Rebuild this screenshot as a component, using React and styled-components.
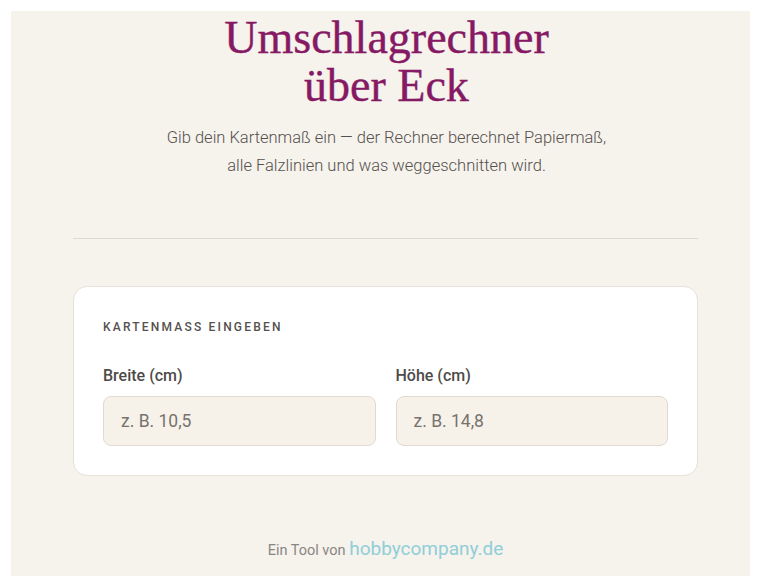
import React from 'react';
import styled, {createGlobalStyle} from 'styled-components';

const GlobalStyle = createGlobalStyle`
	body {
		margin: 0;
		background: #ffffff;
		font-family: Roboto, "Liberation Sans", sans-serif;
	}
`

export default function App(){
	return (
		<>
		<GlobalStyle />
		<Page>
			<Header>
				<Title>Umschlagrechner<br />über Eck</Title>
				<Intro>
					Gib dein Kartenmaß ein — der Rechner berechnet Papiermaß,<br />
					alle Falzlinien und was weggeschnitten wird.
				</Intro>
			</Header>
			<Divider />
			<Card>
				<SectionLabel>Kartenmass eingeben</SectionLabel>
				<Fields>
					<Field>
						<FieldLabel>Breite (cm)</FieldLabel>
						<Input placeholder="z. B. 10,5" />
					</Field>
					<Field>
						<FieldLabel>Höhe (cm)</FieldLabel>
						<Input placeholder="z. B. 14,8" />
					</Field>
				</Fields>
			</Card>
			<Footer>
				Ein Tool von <Brand>hobbycompany.de</Brand>
			</Footer>
		</Page>
		</>
	)
}

const Page = styled.div`
	margin: 11px 18px 5px 11px;
	height: 565px;
	box-sizing: border-box;
	background: #f6f2ec;
	padding: 0 52px 0 62px;
	display: flex;
	flex-direction: column;
`

const Header = styled.header`
	text-align: center;
	padding-top: 3px;
	padding-left: 2px;
`

const Title = styled.h1`
	margin: 0;
	font-family: "Liberation Serif", "DejaVu Serif", serif;
	font-weight: 400;
	font-size: 46px;
	line-height: 48px;
	color: #861964;
	-webkit-text-stroke: 0.4px #861964;
`

const Intro = styled.p`
	margin: 14px 0 0;
	font-size: 16.5px;
	font-weight: 300;
	line-height: 28px;
	color: #55514e;
`

const Divider = styled.hr`
	margin: 58px 0 0;
	border: 0;
	border-top: 1px solid #ddd8d0;
`

const Card = styled.section`
	margin-top: 47px;
	background: #ffffff;
	border: 1px solid #e6e1d9;
	border-radius: 14px;
	padding: 33px 29px 29px;
`

const SectionLabel = styled.h2`
	margin: 0;
	font-size: 12px;
	font-weight: 500;
	letter-spacing: 2.2px;
	text-transform: uppercase;
	color: #55514e;
`

const Fields = styled.div`
	display: grid;
	grid-template-columns: 1fr 1fr;
	gap: 20px;
	margin-top: 32px;
`

const Field = styled.div`
	display: flex;
	flex-direction: column;
	gap: 11px;
`

const FieldLabel = styled.label`
	font-size: 16px;
	font-weight: 500;
	color: #4e4b48;
`

const Input = styled.input`
	box-sizing: border-box;
	height: 50px;
	padding: 0 17px;
	background: #f6f2ea;
	border: 1px solid #e0dbd2;
	border-radius: 8px;
	font-family: Roboto, "Liberation Sans", sans-serif;
	font-size: 17.5px;
	color: #333;
	&::placeholder {
		color: #77726d;
	}
`

const Footer = styled.footer`
	margin-top: auto;
	padding-bottom: 16px;
	text-align: center;
	font-size: 14.5px;
	color: #8a8682;
`

const Brand = styled.span`
	font-size: 19px;
	color: #8fcfd8;
`
